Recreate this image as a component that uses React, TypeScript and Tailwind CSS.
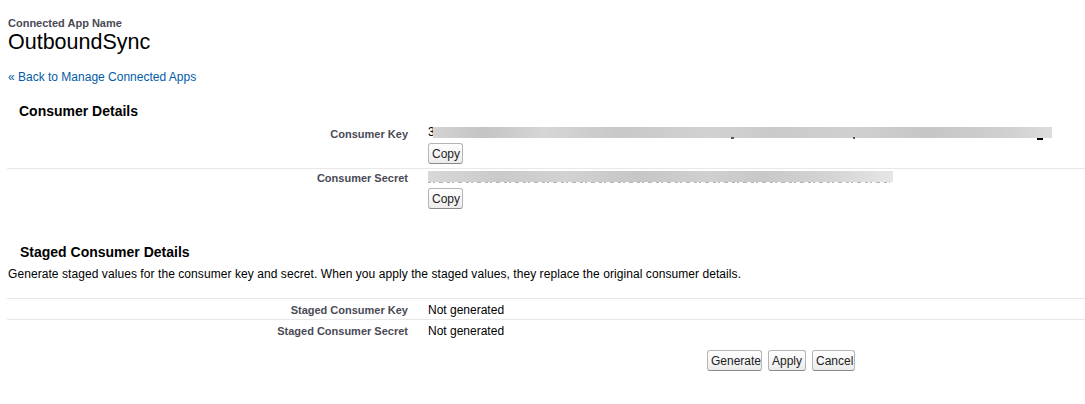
export default function App() {
  const btn =
    'rounded-[3px] border border-[#b5b5b5] border-b-[#8a8a8a] bg-gradient-to-b from-white to-[#ececec] px-[3px] h-[21px] text-[12px] leading-none text-[#222]'
  const label = 'w-[411px] pr-[10px] text-right text-[11px] font-bold text-[#4a4a56]'

  return (
    <div className="min-h-screen bg-white text-[12px] text-black [font-family:Arial,'Liberation_Sans',sans-serif]">
      <div className="pt-[17px] pl-[8px]">
        <div className="text-[11px] font-bold leading-[13px] text-[#4a4a56]">Connected App Name</div>
        <h1 className="text-[21.5px] leading-[25px] text-black">OutboundSync</h1>
      </div>

      <div className="mt-[13px] pl-[8px]">
        <a className="text-[12px] leading-[15px] text-[#015ba7]" href="#">
          « Back to Manage Connected Apps
        </a>
      </div>

      <div className="pl-[7px]">
        <h2 className="mt-[17px] pl-[12px] text-[14px] font-bold leading-[17px]">Consumer Details</h2>

        <div className="mt-[4px]">
          <div className="flex border-b border-[#e8e8e8] pb-[4px]">
            <div className={`${label} pt-[4px] leading-[13px]`}>Consumer Key</div>
            <div className="flex flex-col items-start pl-[10px] pt-[2px]">
              <div className="relative flex h-[13px] items-center">
                <span className="leading-[13px]">3</span>
                <div className="ml-[-2px] h-[11px] w-[619px] bg-[linear-gradient(90deg,#d4d4d4_0%,#c4c4c4_8%,#d6d6d6_18%,#c8c8c8_30%,#d2d2d2_45%,#cacaca_55%,#d0d0d0_68%,#c6c6c6_80%,#cfcfcf_92%,#dcdcdc_100%)]" />
                <div className="absolute left-[303px] top-[11px] h-[2px] w-[3px] bg-[#555]" />
                <div className="absolute left-[425px] top-[11px] h-[2px] w-[2px] bg-[#555]" />
                <div className="absolute left-[609px] top-[12px] h-[2px] w-[6px] bg-black" />
              </div>
              <button className={`${btn} mt-[4px] w-[35px]`}>Copy</button>
            </div>
          </div>

          <div className="flex pb-[18px]">
            <div className={`${label} pt-[3px] leading-[13px]`}>Consumer Secret</div>
            <div className="flex flex-col items-start pl-[10px] pt-[2px]">
              <div className="relative h-[14px] w-[465px] overflow-hidden">
                <div className="absolute left-0 top-[10px] h-[2px] w-[462px] bg-[repeating-linear-gradient(90deg,#666_0px,#666_3px,transparent_3px,transparent_5px,#666_5px,#666_7px,transparent_7px,transparent_11px,#666_11px,#666_15px,transparent_15px,transparent_19px)] opacity-50" />
                <div className="absolute left-0 top-0 h-[11px] w-[465px] bg-[linear-gradient(90deg,#d8d8d8_0%,#cacaca_15%,#d2d2d2_30%,#c6c6c6_45%,#d0d0d0_60%,#c8c8c8_72%,#d4d4d4_86%,#e6e6e6_100%)]" />
              </div>
              <button className={`${btn} mt-[3px] w-[35px]`}>Copy</button>
            </div>
          </div>
        </div>

        <h2 className="mt-[17px] pl-[13px] text-[14px] font-bold leading-[17px]">Staged Consumer Details</h2>
        <p className="mt-[6px] pl-[1px] text-[12px] leading-[15px] tracking-[0.07px]">
          Generate staged values for the consumer key and secret. When you apply the staged values, they replace the
          original consumer details.
        </p>

        <div className="mt-[16px] border-t border-[#e8e8e8]">
          <div className="flex border-b border-[#e8e8e8] pt-[4px] pb-[2px]">
            <div className={`${label} leading-[14px]`}>Staged Consumer Key</div>
            <div className="pl-[10px] leading-[14px]">Not generated</div>
          </div>
          <div className="flex pt-[4px] pb-[2px]">
            <div className={`${label} leading-[14px]`}>Staged Consumer Secret</div>
            <div className="pl-[10px] leading-[14px]">Not generated</div>
          </div>
        </div>

        <div className="mt-[10px] flex gap-[6px] pl-[700px]">
          <button className={`${btn} w-[55px]`}>Generate</button>
          <button className={`${btn} w-[38px]`}>Apply</button>
          <button className={`${btn} w-[43px]`}>Cancel</button>
        </div>
      </div>
    </div>
  )
}
